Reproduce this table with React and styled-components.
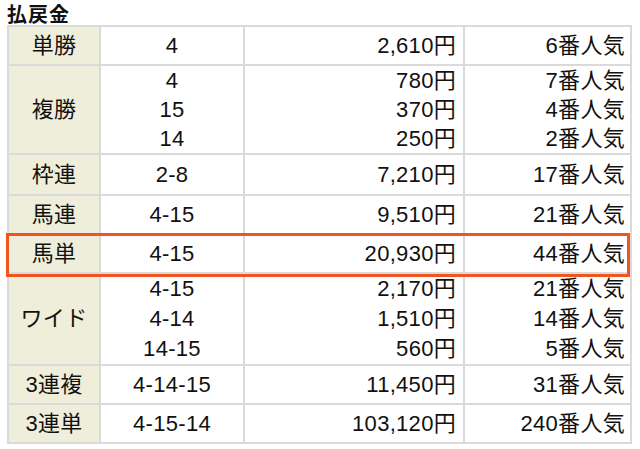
import React from "react";
import styled, { createGlobalStyle } from "styled-components";

const Global = createGlobalStyle`
  html, body { margin: 0; padding: 0; background: #fff; }
  body { font-family: "Liberation Sans", "Noto Sans CJK JP", sans-serif; color: #111; }
`;

const Page = styled.div`
  padding: 0 0 0 7px;
  width: 625px;
`;

const Title = styled.h2`
  margin: 0;
  height: 25px;
  font-size: 20px;
  line-height: 28px;
  font-weight: 700;
  font-family: "Noto Sans CJK JP", sans-serif;
  color: #111;
  letter-spacing: 1px;
`;

const Table = styled.div`
  position: relative;
  border-top: 2px solid #dadada;
  border-left: 2px solid #dadada;
  font-size: 22px;
  letter-spacing: 0.3px;
`;

const Row = styled.div`
  position: relative;
  display: grid;
  grid-template-columns: 92px 144px 220px 167px;
  height: ${(p) => p.$h}px;
  ${(p) =>
    p.$hl &&
    `
    z-index: 1;
    &::after {
      content: "";
      position: absolute;
      left: -3px;
      top: -2px;
      right: 2px;
      bottom: -3px;
      border: 3px solid #f1541f;
      pointer-events: none;
    }
  `}
`;

const Cell = styled.div`
  border-right: 2px solid #dadada;
  border-bottom: 2px solid #dadada;
  display: flex;
  flex-direction: column;
  justify-content: center;
  align-items: ${(p) => (p.$align === "right" ? "flex-end" : "center")};
  padding: ${(p) => (p.$align === "right" ? `0 ${p.$pr}px 0 0` : "0")};
  background: ${(p) => (p.$label ? "#efeedb" : "#fff")};
`;

const Line = styled.span`
  display: block;
  line-height: ${(p) => p.$lh}px;
  white-space: nowrap;
`;

const rows = [
  { label: "単勝", h: 39, lh: 30, items: [["4", "2,610円", "6番人気"]] },
  {
    label: "複勝",
    h: 89,
    lh: 29,
    items: [
      ["4", "780円", "7番人気"],
      ["15", "370円", "4番人気"],
      ["14", "250円", "2番人気"],
    ],
  },
  { label: "枠連", h: 41, lh: 30, items: [["2-8", "7,210円", "17番人気"]] },
  { label: "馬連", h: 39, lh: 30, items: [["4-15", "9,510円", "21番人気"]] },
  { label: "馬単", h: 39, lh: 30, hl: true, items: [["4-15", "20,930円", "44番人気"]] },
  {
    label: "ワイド",
    h: 92,
    lh: 30,
    items: [
      ["4-15", "2,170円", "21番人気"],
      ["4-14", "1,510円", "14番人気"],
      ["14-15", "560円", "5番人気"],
    ],
  },
  { label: "3連複", h: 39, lh: 30, items: [["4-14-15", "11,450円", "31番人気"]] },
  { label: "3連単", h: 39, lh: 30, items: [["4-15-14", "103,120円", "240番人気"]] },
];

export default function App() {
  return (
    <>
      <Global />
      <Page>
        <Title>払戻金</Title>
        <Table>
          {rows.map((r) => (
            <Row key={r.label} $h={r.h} $hl={r.hl}>
              <Cell $label>
                <Line $lh={r.lh}>{r.label}</Line>
              </Cell>
              <Cell>
                {r.items.map((it, i) => (
                  <Line key={i} $lh={r.lh}>{it[0]}</Line>
                ))}
              </Cell>
              <Cell $align="right" $pr={7}>
                {r.items.map((it, i) => (
                  <Line key={i} $lh={r.lh}>{it[1]}</Line>
                ))}
              </Cell>
              <Cell $align="right" $pr={5}>
                {r.items.map((it, i) => (
                  <Line key={i} $lh={r.lh}>{it[2]}</Line>
                ))}
              </Cell>
            </Row>
          ))}
        </Table>
      </Page>
    </>
  );
}
